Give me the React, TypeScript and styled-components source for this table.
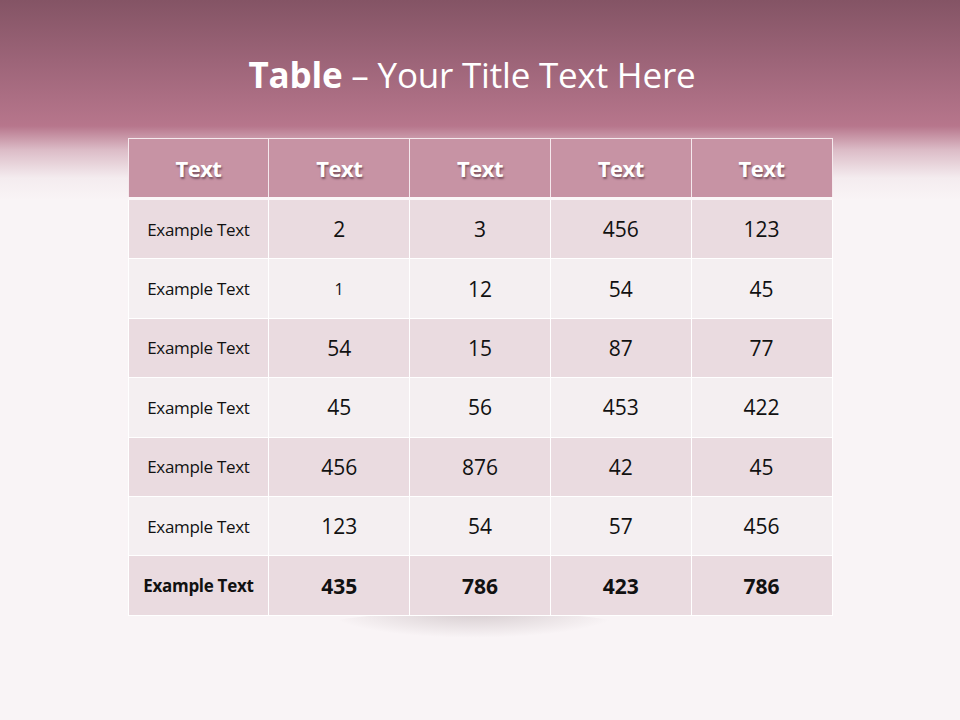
import React from "react";
import styled, { createGlobalStyle } from "styled-components";

const GlobalStyle = createGlobalStyle`
  html, body {
    margin: 0;
    padding: 0;
  }
  body {
    width: 960px;
    height: 720px;
    overflow: hidden;
    font-family: "Open Sans", "Noto Sans", sans-serif;
    background: #f9f4f6;
  }
`;

const header = ["Text", "Text", "Text", "Text", "Text"];

const rows: string[][] = [
  ["Example Text", "2", "3", "456", "123"],
  ["Example Text", "1", "12", "54", "45"],
  ["Example Text", "54", "15", "87", "77"],
  ["Example Text", "45", "56", "453", "422"],
  ["Example Text", "456", "876", "42", "45"],
  ["Example Text", "123", "54", "57", "456"],
  ["Example Text", "435", "786", "423", "786"],
];

export default function App() {
  return (
    <>
      <GlobalStyle />
      <Slide>
        <Banner>
          <Title>
            <b>Table</b> – Your Title Text Here
          </Title>
        </Banner>
        <TableWrap>
          <Table>
            <thead>
              <tr>
                {header.map((h, i) => (
                  <HeadCell key={i}>{h}</HeadCell>
                ))}
              </tr>
            </thead>
            <tbody>
              {rows.map((r, i) => (
                <Row key={i} $odd={i % 2 === 0}>
                  {r.map((c, j) => (
                    <Cell
                      key={j}
                      $label={j === 0}
                      $bold={i === rows.length - 1}
                      $small={i === 1 && j === 1}
                    >
                      {c}
                    </Cell>
                  ))}
                </Row>
              ))}
            </tbody>
          </Table>
          <Shadow />
        </TableWrap>
      </Slide>
    </>
  );
}

const Slide = styled.div`
  width: 960px;
  height: 720px;
  display: flex;
  flex-direction: column;
  align-items: center;
  background: linear-gradient(
    to bottom,
    #845465 0px,
    #9c6478 60px,
    #b7768c 126px,
    #dcbcc7 150px,
    #f4ecef 178px,
    #f9f4f6 200px,
    #f9f4f6 100%
  );
`;

const Banner = styled.div`
  height: 138px;
  width: 100%;
  display: flex;
  justify-content: center;
  padding: 52px 16px 0 0;
  box-sizing: border-box;
`;

const Title = styled.h1`
  margin: 0;
  font-size: 35px;
  font-weight: 400;
  line-height: 46px;
  color: #ffffff;
  letter-spacing: -0.2px;

  b {
    font-weight: 700;
  }
`;

const TableWrap = styled.div`
  position: relative;
  width: 705px;
`;

const Table = styled.table`
  position: relative;
  z-index: 1;
  width: 705px;
  border-collapse: collapse;
  table-layout: fixed;
  border: 1px solid #ffffff;
`;

const HeadCell = styled.th`
  height: 58px;
  padding: 0;
  background: #c793a4;
  border: 1px solid #f5e9ed;
  border-bottom: 3px solid #fbf7f8;
  color: #ffffff;
  font-size: 22px;
  font-weight: 700;
  text-align: center;
  letter-spacing: -0.5px;
  text-shadow: 1px 2px 2px rgba(60, 30, 40, 0.55);
`;

const Row = styled.tr<{ $odd: boolean }>`
  background: ${(p) => (p.$odd ? "#eadbe0" : "#f4eff1")};
`;

const Cell = styled.td<{ $label: boolean; $bold: boolean; $small: boolean }>`
  height: 58.4px;
  padding: 0;
  border: 1px solid #ffffff;
  text-align: center;
  color: #111111;
  font-size: ${(p) => (p.$label ? "17px" : p.$small ? "16px" : "21px")};
  font-weight: ${(p) => (p.$bold ? 700 : 400)};
  letter-spacing: ${(p) => (p.$label ? "-0.3px" : "0")};
`;

const Shadow = styled.div`
  position: absolute;
  left: 200px;
  width: 292px;
  bottom: -22px;
  height: 26px;
  border-radius: 50%;
  background: radial-gradient(ellipse at center top, rgba(140, 120, 125, 0.32), rgba(140, 120, 125, 0) 70%);
`;
